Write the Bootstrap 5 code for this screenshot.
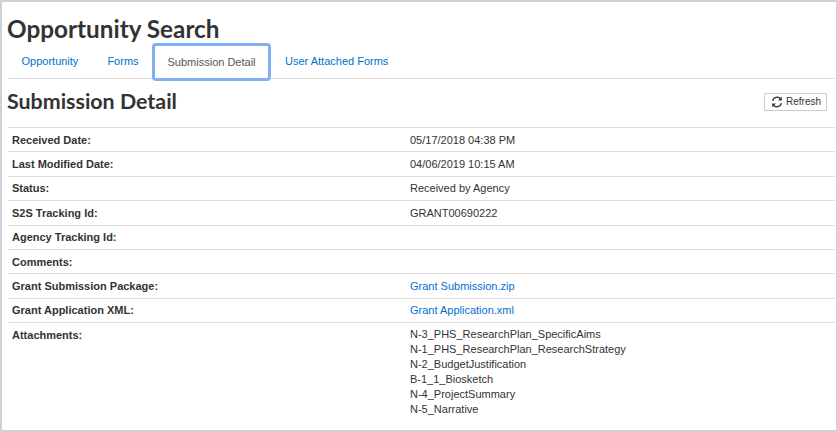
<!DOCTYPE html>
<html lang="en"><head><meta charset="utf-8"><title>Submission Detail</title>
<link href="https://cdn.jsdelivr.net/npm/bootstrap@5.3.0/dist/css/bootstrap.min.css" rel="stylesheet">
<style>
html,body{height:432px;overflow:hidden}
body{font-family:"Liberation Sans",Arial,sans-serif;font-size:11px;color:#333;background:#fff}
.frame{height:432px;border:2px solid #ccd1d5;border-right-width:1px;padding:0 1px 0 6px;overflow:hidden}
.page-title{font-family:Lato,sans-serif;font-weight:700;font-size:24.3px;line-height:30px;margin:12px 0 0 -1px;color:#333}
.sec-title{font-family:Lato,sans-serif;font-weight:700;font-size:21.4px;line-height:26px;margin:-1px 0 1px -1px;color:#333}
.tabbar{border-bottom:1px solid #ddd;height:35px;flex-wrap:nowrap}
.tabbar .nav-item:first-child{margin-left:-1px}
.tabbar .nav-link{font-size:11px;line-height:14px;padding:0 14.5px 2px;height:35px;display:flex;align-items:center;color:#0070d2;border-radius:4px;border:0}
.tabbar .tab-now{color:#555;height:38px;border:3px solid #7fb0f2;background:#fff;width:119px;justify-content:center;padding:0;margin:-1px -.5px -1px -1px}
.headrow{margin-top:10px;margin-bottom:12px;padding-right:8px;height:26px}
.btn-refresh{font-size:10px;line-height:12px;padding:0 5px 0 6px;height:18px;border:1px solid #ccc;border-radius:1px;color:#333;background:#fff;display:flex;align-items:center;gap:3px}
.info-table{margin:0;font-size:11px;color:#333;width:827px;table-layout:fixed}
.info-table td{padding:4.5px 4px;line-height:14.4px;border-top:1px solid #ddd;border-bottom:0;vertical-align:top;color:#333;box-shadow:none}
.info-table .lbl{font-weight:700;width:398px}
.info-table a{color:#0070d2;text-decoration:none}
.info-table td.att{line-height:15px;padding-top:3.5px}
</style></head><body>
<div class="frame">
<h1 class="page-title">Opportunity Search</h1>
<ul class="nav tabbar">
<li class="nav-item"><a class="nav-link" href="#">Opportunity</a></li>
<li class="nav-item"><a class="nav-link" href="#">Forms</a></li>
<li class="nav-item"><a class="nav-link tab-now" href="#">Submission Detail</a></li>
<li class="nav-item"><a class="nav-link" href="#">User Attached Forms</a></li>
</ul>
<div class="d-flex justify-content-between align-items-center headrow">
<h2 class="sec-title">Submission Detail</h2>
<button class="btn btn-refresh" type="button"><svg width="12" height="12" viewBox="0 0 16 16" fill="none" stroke="#333" stroke-width="1.7"><path d="M2.2 6.5A6 6 0 0 1 13 4.2"/><path d="M13.8 9.5A6 6 0 0 1 3 11.8"/><path d="M14.4 1v5h-5z" fill="#333" stroke="none"/><path d="M1.6 15v-5h5z" fill="#333" stroke="none"/></svg>Refresh</button>
</div>
<table class="table info-table"><tbody>
<tr><td class="lbl">Received Date:</td><td>05/17/2018 04:38 PM</td></tr>
<tr><td class="lbl">Last Modified Date:</td><td>04/06/2019 10:15 AM</td></tr>
<tr><td class="lbl">Status:</td><td>Received by Agency</td></tr>
<tr><td class="lbl">S2S Tracking Id:</td><td>GRANT00690222</td></tr>
<tr><td class="lbl">Agency Tracking Id:</td><td></td></tr>
<tr><td class="lbl">Comments:</td><td></td></tr>
<tr><td class="lbl">Grant Submission Package:</td><td><a href="#">Grant Submission.zip</a></td></tr>
<tr><td class="lbl">Grant Application XML:</td><td><a href="#">Grant Application.xml</a></td></tr>
<tr><td class="lbl">Attachments:</td><td class="att">N-3_PHS_ResearchPlan_SpecificAims<br>N-1_PHS_ResearchPlan_ResearchStrategy<br>N-2_BudgetJustification<br>B-1_1_Biosketch<br>N-4_ProjectSummary<br>N-5_Narrative</td></tr>
</tbody></table>
</div>
</body></html>
